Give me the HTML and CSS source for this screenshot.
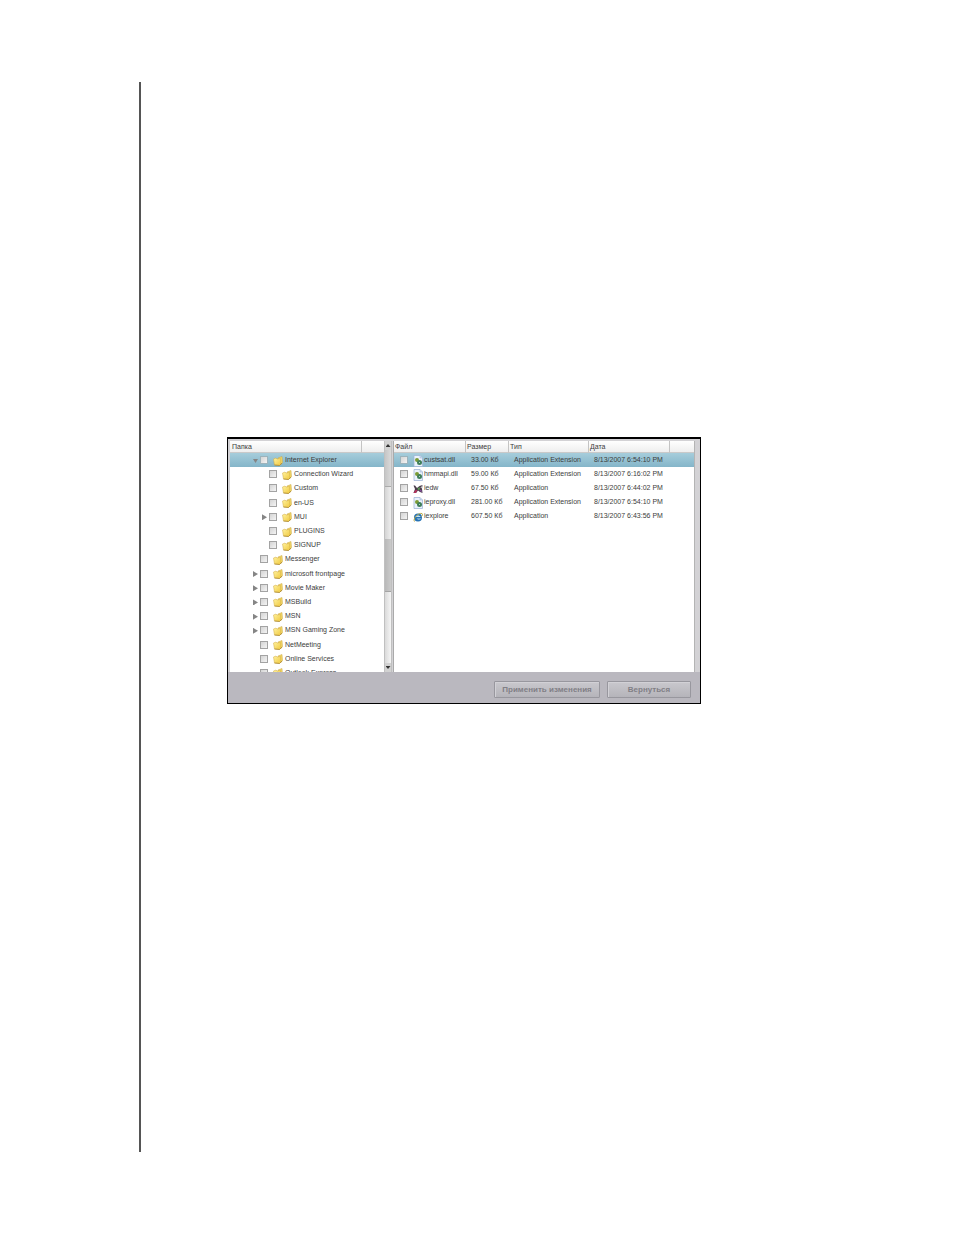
FILE: index.html
```html
<!DOCTYPE html>
<html lang="ru">
<head>
  <meta charset="utf-8">
  <meta name="viewport" content="width=device-width, initial-scale=1">
  <title>Internet Explorer</title>
  <link rel="stylesheet" href="styles.css">
</head>
<body>
  <svg class="sprites" aria-hidden="true">
    <defs>
      <linearGradient id="folder-fill" x1="0" y1="0" x2="1" y2="1">
        <stop offset="0" stop-color="#fff3a0"/>
        <stop offset="1" stop-color="#f0c83e"/>
      </linearGradient>
    </defs>
    <symbol id="folder" viewBox="0 0 20 20">
      <path d="M10 4 L18 1 L19 13 L15 18 Z" fill="#f3d968" stroke="#c9a545"/>
      <path d="M1 6 L6 4 L8 6 L15 5 L16 16 L13 19 L3 18 Z" fill="url(#folder-fill)" stroke="#d0a840"/>
      <path d="M3 18 L13 19 L18 14" fill="none" stroke="#a98a3a" stroke-width="1.5"/>
    </symbol>
    <symbol id="dll" viewBox="0 0 20 24">
      <path d="M2 1 H14 L19 6 V23 H2 Z" fill="#eaf2fc" stroke="#9db3d6" stroke-width="1.5"/>
      <path d="M14 1 V6 H19" fill="#cddcee" stroke="#9db3d6"/>
      <circle cx="8" cy="10" r="4" fill="#7d9c34"/>
      <circle cx="13" cy="15" r="5" fill="#3f7f5a"/>
      <circle cx="13" cy="15" r="1" fill="#dfeee0"/>
    </symbol>
    <symbol id="iedw" viewBox="0 0 20 20">
      <path d="M1 3 L4 3 L8 8 L13 4 L19 2 L18 9 L19 18 L14 16 L10 13 L6 18 L1 18 L4 10 Z" fill="#4a3d4c"/>
      <path d="M1 18 L5 12 L9 12 L6 18 Z" fill="#b5305c"/>
      <path d="M9 9 L13 6 L14 11 L10 12 Z" fill="#5c9a55"/>
      <path d="M13 14 L16 11 L18 16 Z" fill="#8b4fa8"/>
      <path d="M15 7 L18 4 L17 9 Z" fill="#f2f2f2"/>
    </symbol>
    <symbol id="ie" viewBox="0 0 20 20">
      <circle cx="10" cy="11" r="8" fill="#2672b4"/>
      <path d="M5 10 C6 6 14 6 15 10 Z" fill="#c3e3f5"/>
      <path d="M7 13 H17 C14 16 9 16 7 13 Z" fill="#b4dcf1"/>
      <path d="M3 19 C-1 14 10 1 18 3 C20 5 19 7 17 9" fill="none" stroke="#b9ab4a" stroke-width="2"/>
    </symbol>
  </svg>

  <main class="page">
    <section class="dialog">
      <div class="panes">
        <div class="folders">
          <div class="tree">
            <div class="tree-head"><span>Папка</span><span></span></div>
            <ul class="tree-list">
              <li class="selected"><i class="arrow open"></i><input type="checkbox" id="f1"><svg class="icon"><use href="#folder"/></svg><label for="f1">Internet Explorer</label></li>
              <li class="child"><i class="arrow none"></i><input type="checkbox" id="f2"><svg class="icon"><use href="#folder"/></svg><label for="f2">Connection Wizard</label></li>
              <li class="child"><i class="arrow none"></i><input type="checkbox" id="f3"><svg class="icon"><use href="#folder"/></svg><label for="f3">Custom</label></li>
              <li class="child"><i class="arrow none"></i><input type="checkbox" id="f4"><svg class="icon"><use href="#folder"/></svg><label for="f4">en-US</label></li>
              <li class="child"><i class="arrow"></i><input type="checkbox" id="f5"><svg class="icon"><use href="#folder"/></svg><label for="f5">MUI</label></li>
              <li class="child"><i class="arrow none"></i><input type="checkbox" id="f6"><svg class="icon"><use href="#folder"/></svg><label for="f6">PLUGINS</label></li>
              <li class="child"><i class="arrow none"></i><input type="checkbox" id="f7"><svg class="icon"><use href="#folder"/></svg><label for="f7">SIGNUP</label></li>
              <li><i class="arrow none"></i><input type="checkbox" id="f8"><svg class="icon"><use href="#folder"/></svg><label for="f8">Messenger</label></li>
              <li><i class="arrow"></i><input type="checkbox" id="f9"><svg class="icon"><use href="#folder"/></svg><label for="f9">microsoft frontpage</label></li>
              <li><i class="arrow"></i><input type="checkbox" id="f10"><svg class="icon"><use href="#folder"/></svg><label for="f10">Movie Maker</label></li>
              <li><i class="arrow"></i><input type="checkbox" id="f11"><svg class="icon"><use href="#folder"/></svg><label for="f11">MSBuild</label></li>
              <li><i class="arrow"></i><input type="checkbox" id="f12"><svg class="icon"><use href="#folder"/></svg><label for="f12">MSN</label></li>
              <li><i class="arrow"></i><input type="checkbox" id="f13"><svg class="icon"><use href="#folder"/></svg><label for="f13">MSN Gaming Zone</label></li>
              <li><i class="arrow none"></i><input type="checkbox" id="f14"><svg class="icon"><use href="#folder"/></svg><label for="f14">NetMeeting</label></li>
              <li><i class="arrow none"></i><input type="checkbox" id="f15"><svg class="icon"><use href="#folder"/></svg><label for="f15">Online Services</label></li>
              <li><i class="arrow none"></i><input type="checkbox" id="f16"><svg class="icon"><use href="#folder"/></svg><label for="f16">Outlook Express</label></li>
            </ul>
          </div>
          <div class="scrollbar">
            <button type="button" class="scroll-btn" aria-label="Вверх"><i class="up"></i></button>
            <div class="track-top"></div>
            <div class="track-mid"></div>
            <div class="thumb"></div>
            <div class="track"></div>
            <button type="button" class="scroll-btn" aria-label="Вниз"><i class="down"></i></button>
          </div>
        </div>

        <div class="files">
          <table>
            <colgroup>
              <col class="col-file"><col class="col-size"><col class="col-type"><col class="col-date"><col>
            </colgroup>
            <thead>
              <tr><th>Файл</th><th>Размер</th><th>Тип</th><th>Дата</th><th></th></tr>
            </thead>
            <tbody>
              <tr class="selected">
                <td><div class="file"><input type="checkbox" id="d1"><svg class="icon"><use href="#dll"/></svg><label for="d1">custsat.dll</label></div></td>
                <td>33.00 Кб</td><td>Application Extension</td><td>8/13/2007 6:54:10 PM</td><td></td>
              </tr>
              <tr>
                <td><div class="file"><input type="checkbox" id="d2"><svg class="icon"><use href="#dll"/></svg><label for="d2">hmmapi.dll</label></div></td>
                <td>59.00 Кб</td><td>Application Extension</td><td>8/13/2007 6:16:02 PM</td><td></td>
              </tr>
              <tr>
                <td><div class="file"><input type="checkbox" id="d3"><svg class="icon"><use href="#iedw"/></svg><label for="d3">iedw</label></div></td>
                <td>67.50 Кб</td><td>Application</td><td>8/13/2007 6:44:02 PM</td><td></td>
              </tr>
              <tr>
                <td><div class="file"><input type="checkbox" id="d4"><svg class="icon"><use href="#dll"/></svg><label for="d4">ieproxy.dll</label></div></td>
                <td>281.00 Кб</td><td>Application Extension</td><td>8/13/2007 6:54:10 PM</td><td></td>
              </tr>
              <tr>
                <td><div class="file"><input type="checkbox" id="d5"><svg class="icon"><use href="#ie"/></svg><label for="d5">iexplore</label></div></td>
                <td>607.50 Кб</td><td>Application</td><td>8/13/2007 6:43:56 PM</td><td></td>
              </tr>
            </tbody>
          </table>
        </div>
      </div>

      <div class="actions">
        <button type="button" class="btn btn-apply" disabled>Применить изменения</button>
        <button type="button" class="btn btn-back" disabled>Вернуться</button>
      </div>
    </section>
  </main>
</body>
</html>
```

FILE: styles.css
```css
* { box-sizing: border-box; }
body {
  margin: 0;
  padding: 82px 0 83px 139px;
  min-height: 100vh;
  display: flex;
  background: #fff;
  font-family: "Liberation Sans", Arial, sans-serif;
  font-size: 7px;
  line-height: 10px;
  color: #3c3c3c;
}
.sprites { position: absolute; width: 0; height: 0; }
.page {
  flex: 1;
  border-left: 2px solid #555;
  padding: 355px 20px 0 86px;
}
.dialog {
  max-width: 474px;
  border: 1px solid #000;
  border-top-width: 2px;
  background: #bab8bf;
}

/* panes */
.panes {
  display: flex;
  gap: 1px;
  height: 233px;
  padding: 2px 5px 0 2px;
  background: #d3d2d5;
}
.folders {
  display: flex;
  flex: 0 0 162px;
  background: #fff;
}
.tree {
  flex: 1;
  overflow: hidden;
}
.tree-head {
  display: grid;
  grid-template-columns: 1fr 22px;
  height: 12px;
}
.tree-head span, th {
  border-right: 1px solid #c4c4c4;
  border-bottom: 1px solid #c9c9c9;
  background: linear-gradient(#fff, #eee);
  padding: 1px 2px 0;
}
.tree-head span:last-child, th:last-child { border-right: none; }
.tree-list {
  list-style: none;
  margin: 0;
  padding: 0;
  display: grid;
  grid-template-rows: repeat(16, 1fr);
  height: 227px;
}
.tree-list li {
  display: flex;
  align-items: center;
  padding-left: 23px;
  white-space: nowrap;
}
.tree-list li.child { padding-left: 32px; }
.selected { background: linear-gradient(#a6cddb, #84b5c9); }
.tree-list .icon { margin: 1px 2px 0 5px; }

.arrow {
  width: 5px;
  height: 6px;
  margin: 1px 2px 0 0;
  background: #858585;
  clip-path: polygon(0 0, 100% 50%, 0 100%);
}
.arrow.open {
  height: 5px;
  clip-path: polygon(0 20%, 100% 20%, 50% 100%);
}
.arrow.none { visibility: hidden; }

input[type="checkbox"] {
  appearance: none;
  flex: none;
  width: 8px;
  height: 8px;
  margin: 0;
  border: 1px solid #a3a3a3;
  background: linear-gradient(135deg, #d4d4d4, #f4f4f4);
}
.selected input[type="checkbox"] { border-color: #9db3bb; }
.icon {
  flex: none;
  width: 10px;
  height: 10px;
}

/* scrollbar */
.scrollbar {
  display: flex;
  flex-direction: column;
  width: 8px;
  border-left: 1px solid #c0c0c0;
  border-right: 1px solid #c0c0c0;
}
.scroll-btn {
  display: flex;
  align-items: center;
  justify-content: center;
  height: 9px;
  padding: 0;
  border: none;
  background: #d2d2d2;
}
.up, .down {
  width: 5px;
  height: 3px;
  background: #333;
  clip-path: polygon(50% 0, 100% 100%, 0 100%);
}
.down { clip-path: polygon(0 0, 100% 0, 50% 100%); }
.track-top {
  flex: 36;
  background: linear-gradient(90deg, #c6c6c6, #d9d9d9);
  border-bottom: 1px solid #aaa;
}
.track-mid {
  flex: 53;
  background: linear-gradient(90deg, #d4d4d4, #eee);
}
.thumb {
  flex: 52;
  background: linear-gradient(90deg, #b9b9b9, #cacaca);
  border-bottom: 1px solid #a4a4a4;
}
.track {
  flex: 72;
  background: linear-gradient(90deg, #dadada, #f5f5f5);
}

/* file table */
.files {
  flex: 1;
  min-width: 0;
  background: #fff;
  border-left: 1px solid #aaa;
  border-right: 1px solid #b4b4b4;
}
table {
  width: 100%;
  table-layout: fixed;
  border-spacing: 0;
}
.col-file { width: 72px; }
.col-size { width: 43px; }
.col-type { width: 80px; }
.col-date { width: 81px; }
th {
  height: 12px;
  padding-left: 1px;
  font-weight: normal;
  text-align: left;
}
td {
  height: 14px;
  padding: 0 0 0 6px;
  white-space: nowrap;
}
td + td { padding-left: 5px; }
.file {
  display: flex;
  align-items: center;
}
.file .icon {
  height: 12px;
  margin: 1px 1px 0 5px;
}

/* bottom bar */
.actions {
  display: flex;
  justify-content: flex-end;
  gap: 7px;
  padding: 9px 9px 5px;
}
.btn {
  height: 17px;
  padding: 0;
  border: 1px solid #98979e;
  border-radius: 1px;
  background: linear-gradient(#c9c8cd, #b5b4ba);
  box-shadow: inset 1px 1px 0 #d2d1d6;
  font: bold 8px "Liberation Sans", Arial, sans-serif;
  color: #817f86;
}
.btn-apply { width: 106px; }
.btn-back { width: 84px; }
```
